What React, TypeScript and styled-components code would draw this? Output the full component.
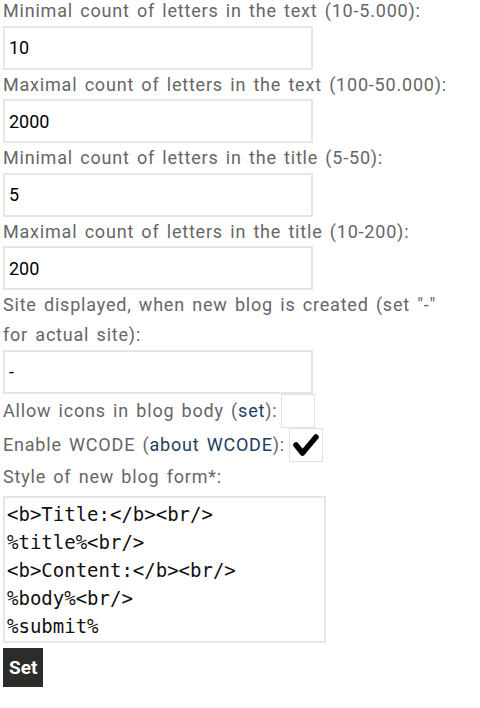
import React, { useState } from 'react';
import styled, { createGlobalStyle } from 'styled-components';

const GlobalStyle = createGlobalStyle`
  html, body {
    margin: 0;
    padding: 0;
    background: #ffffff;
  }
  body {
    font-family: Roboto, "Noto Sans", "Liberation Sans", sans-serif;
  }
`;

const Form = styled.form`
  display: flex;
  flex-direction: column;
  align-items: flex-start;
  margin-top: -4px;
  padding: 0 3px;
`;

const Label = styled.div`
  font-size: 18px;
  line-height: 29.6px;
  color: #666666;
  letter-spacing: 0.8px;
  word-spacing: 2px;
  max-width: 462px;
`;

const TextInput = styled.input`
  box-sizing: border-box;
  width: 310px;
  height: 44px;
  margin: 0;
  padding: 0 4px;
  border: 2px solid #e6e6e6;
  background: #ffffff;
  font-family: Roboto, "Noto Sans", sans-serif;
  font-size: 18px;
  color: #000000;
  outline: none;
`;

const CheckRow = styled.div`
  display: flex;
  align-items: center;
  height: 34px;
  font-size: 18px;
  color: #666666;
  letter-spacing: 0.8px;
  word-spacing: 2px;
  white-space: pre;
`;

const Link = styled.a`
  color: #1e3f60;
  text-decoration: none;
`;

const CheckBox = styled.span`
  box-sizing: border-box;
  display: inline-flex;
  align-items: center;
  justify-content: center;
  width: 34px;
  height: 34px;
  margin-left: 4px;
  border: 1px solid #e2e2e2;
  background: #ffffff;
  cursor: pointer;
`;

const Code = styled.textarea`
  box-sizing: border-box;
  width: 323px;
  height: 147px;
  margin: 5px 0 0;
  padding: 2px 2px;
  border: 2px solid #e6e6e6;
  font-family: "DejaVu Sans Mono", "Liberation Mono", monospace;
  font-size: 19px;
  line-height: 28px;
  color: #111111;
  resize: none;
  outline: none;
  overflow: hidden;
`;

const Submit = styled.button`
  margin-top: 5px;
  height: 39px;
  padding: 0 6px;
  border: none;
  background: #2b2d2b;
  color: #ffffff;
  font-family: Roboto, "Liberation Sans", sans-serif;
  font-weight: 700;
  font-size: 19px;
  cursor: pointer;
`;

const Check = () => (
  <svg width="26" height="22" viewBox="0 0 26 22">
    <path
      d="M3 11 L9.5 19 L23 3"
      fill="none"
      stroke="#000"
      strokeWidth="5.5"
      strokeLinecap="round"
      strokeLinejoin="round"
    />
  </svg>
);

const fields = [
  { label: 'Minimal count of letters in the text (10-5.000):', value: '10' },
  { label: 'Maximal count of letters in the text (100-50.000):', value: '2000' },
  { label: 'Minimal count of letters in the title (5-50):', value: '5' },
  { label: 'Maximal count of letters in the title (10-200):', value: '200' },
  { label: 'Site displayed, when new blog is created (set "-" for actual site):', value: '-' },
];

const template = '<b>Title:</b><br/>\n%title%<br/>\n<b>Content:</b><br/>\n%body%<br/>\n%submit%';

export default function App() {
  const [icons, setIcons] = useState(false);
  const [wcode, setWcode] = useState(true);

  return (
    <>
      <GlobalStyle />
      <Form onSubmit={(e) => e.preventDefault()}>
        {fields.map((f) => (
          <React.Fragment key={f.label}>
            <Label>{f.label}</Label>
            <TextInput defaultValue={f.value} />
          </React.Fragment>
        ))}
        <CheckRow>
          Allow icons in blog body (<Link href="#">set</Link>):
          <CheckBox onClick={() => setIcons(!icons)}>{icons && <Check />}</CheckBox>
        </CheckRow>
        <CheckRow>
          Enable WCODE (<Link href="#">about WCODE</Link>):
          <CheckBox onClick={() => setWcode(!wcode)}>{wcode && <Check />}</CheckBox>
        </CheckRow>
        <Label>Style of new blog form*:</Label>
        <Code defaultValue={template} />
        <Submit type="submit">Set</Submit>
      </Form>
    </>
  );
}
